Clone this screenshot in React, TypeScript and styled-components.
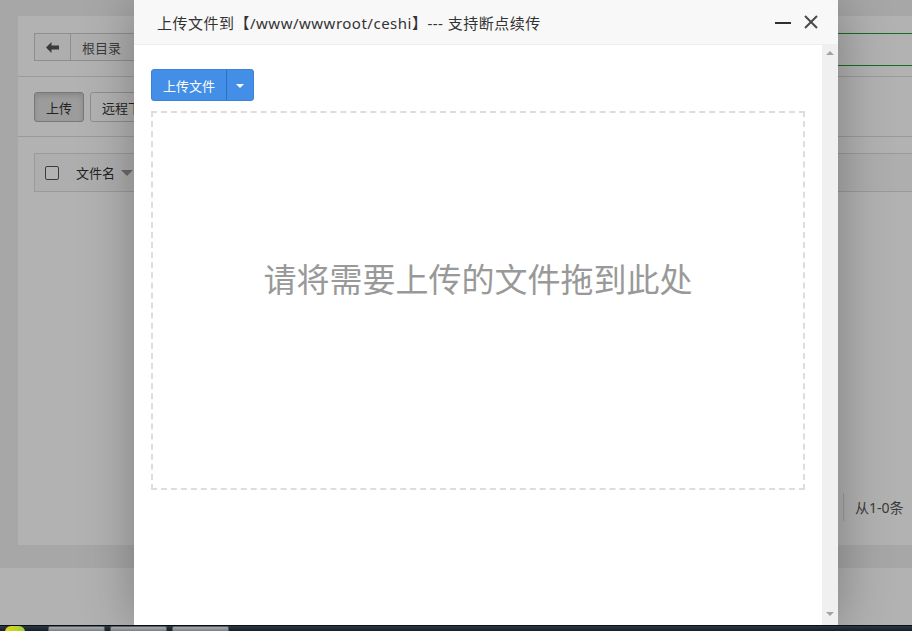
import React from 'react'
import styled, { createGlobalStyle } from 'styled-components'

const GlobalStyle = createGlobalStyle`
  html, body {
    margin: 0;
    padding: 0;
    width: 912px;
    height: 631px;
    overflow: hidden;
    background: #1b2631;
  }
  body {
    font-family: 'Noto Sans', 'Noto Sans CJK SC', sans-serif;
    color: #555;
  }
  * {
    box-sizing: border-box;
  }
`

const Screen = styled.div`
  display: flex;
  flex-direction: column;
  width: 912px;
  height: 631px;
`

const Page = styled.div`
  position: relative;
  height: 625px;
  flex-shrink: 0;
  overflow: hidden;
  background: #f0f0f0;
  display: flex;
  flex-direction: column;
`

const Main = styled.main`
  flex: 1;
  display: flex;
  padding: 16px 0 23px 18px;
  min-height: 0;
`

const Panel = styled.section`
  width: 930px;
  flex-shrink: 0;
  background: #fff;
  display: flex;
  flex-direction: column;
`

const TopRow = styled.div`
  display: flex;
  align-items: flex-start;
  justify-content: space-between;
  padding: 17px 16px 10px;
  border-bottom: 1px solid #ddd;
`

const PathBar = styled.div`
  display: flex;
  height: 28px;
  border: 1px solid #ccc;
  background: #fafafa;
`

const BackBtn = styled.div`
  width: 36px;
  display: flex;
  align-items: center;
  justify-content: center;
  border-right: 1px solid #ccc;
  color: #555;
`

const Crumb = styled.div`
  display: flex;
  align-items: center;
  padding: 0 14px 0 11px;
  font-size: 13px;
  color: #555;
`

const SearchBox = styled.div`
  width: 280px;
  height: 33px;
  border: 1px solid #1e9c36;
  background: #fff;
`

const ToolRow = styled.div`
  display: flex;
  gap: 6px;
  padding: 15px 16px 14px;
  border-bottom: 1px solid #ddd;
`

const ToolButton = styled.button<{ $active?: boolean }>`
  height: 30px;
  padding: 0 11px;
  font-family: inherit;
  font-size: 13px;
  color: #333;
  border: 1px solid ${({ $active }) => ($active ? '#adadad' : '#ccc')};
  border-radius: 3px;
  background: ${({ $active }) => ($active ? '#e0e0e0' : '#fff')};
  box-shadow: ${({ $active }) => ($active ? 'inset 0 3px 5px rgba(0,0,0,.125)' : 'none')};
`

const TableArea = styled.div`
  padding: 16px 0 0 16px;
`

const HeadRow = styled.div`
  display: flex;
  align-items: center;
  height: 39px;
  border: 1px solid #ddd;
  background: #fafafa;
  font-size: 13px;
  color: #333;
`

const CheckBox = styled.span`
  width: 14px;
  height: 14px;
  margin: 0 17px 0 10px;
  border: 1px solid #555;
  border-radius: 2px;
  background: #fff;
`

const HeadCell = styled.span<{ $w: number }>`
  width: ${({ $w }) => $w}px;
  display: flex;
  align-items: center;
  gap: 6px;
`

const Caret = styled.span`
  width: 0;
  height: 0;
  border-left: 6px solid transparent;
  border-right: 6px solid transparent;
  border-top: 6px solid #999;
`

const Pager = styled.div`
  margin-top: auto;
  display: flex;
  justify-content: flex-end;
  padding: 0 36px 24px;
`

const PagerItem = styled.span`
  height: 28px;
  width: 69px;
  display: flex;
  align-items: center;
  padding: 0 0 0 11px;
  border-left: 1px solid #ddd;
  font-size: 14px;
  color: #555;
  white-space: nowrap;
`

const Footer = styled.footer`
  height: 57px;
  flex-shrink: 0;
  background: #fff;
`

const Overlay = styled.div`
  position: absolute;
  inset: 0;
  background: rgba(0, 0, 0, 0.3);
  z-index: 10;
`

const Modal = styled.div`
  position: absolute;
  left: 134px;
  top: 0;
  width: 704px;
  height: 625px;
  z-index: 11;
  display: flex;
  flex-direction: column;
  background: #fff;
  box-shadow: 1px 1px 50px rgba(0, 0, 0, 0.3);
`

const ModalHead = styled.div`
  height: 45px;
  flex-shrink: 0;
  display: flex;
  align-items: center;
  padding: 0 19px 0 23px;
  background: #f8f8f8;
  border-bottom: 1px solid #eee;
`

const ModalTitle = styled.div`
  flex: 1;
  font-size: 15px;
  letter-spacing: 0.5px;
  color: #333;
  white-space: nowrap;
`

const HeadTools = styled.div`
  display: flex;
  align-items: center;
  gap: 12px;
`

const MinLine = styled.span`
  display: block;
  width: 16px;
  height: 2px;
  margin-top: 2px;
  background: #2f2f2f;
`

const CloseBtn = styled.span`
  display: flex;
  color: #4a4a4a;
`

const ModalBody = styled.div`
  flex: 1;
  display: flex;
  min-height: 0;
`

const BodyContent = styled.div`
  flex: 1;
  padding: 24px 17px;
`

const BtnGroup = styled.div`
  display: inline-flex;
  height: 32px;
  border-radius: 3px;
  overflow: hidden;
  background: #438ee6;
  border: 1px solid #3b82d8;
`

const UploadBtn = styled.span`
  display: flex;
  align-items: center;
  padding: 0 11px;
  font-size: 13px;
  color: #fff;
`

const DropBtn = styled.span`
  width: 27px;
  display: flex;
  align-items: center;
  justify-content: center;
  border-left: 1px solid #2f6fc0;
`

const WhiteCaret = styled.span`
  width: 0;
  height: 0;
  border-left: 4px solid transparent;
  border-right: 4px solid transparent;
  border-top: 4px solid #fff;
  margin-top: 1px;
`

const DropZone = styled.div`
  margin-top: 10px;
  height: 379px;
  border: 2px dashed #ddd;
  padding-top: 147px;
  text-align: center;
  font-size: 33px;
  line-height: 40px;
  color: #999;
`

const ScrollTrack = styled.div`
  width: 16px;
  flex-shrink: 0;
  background: #f0f0f0;
  display: flex;
  flex-direction: column;
  justify-content: space-between;
  align-items: center;
  padding: 6px 0 9px;
`

const ArrowUp = styled.span`
  width: 0;
  height: 0;
  border-left: 4px solid transparent;
  border-right: 4px solid transparent;
  border-bottom: 4px solid #a3a3a3;
`

const ArrowDown = styled.span`
  width: 0;
  height: 0;
  border-left: 4px solid transparent;
  border-right: 4px solid transparent;
  border-top: 4px solid #a3a3a3;
`

const Taskbar = styled.div`
  flex: 1;
  display: flex;
  align-items: flex-start;
  gap: 5px;
  padding-left: 5px;
  background: linear-gradient(#2a3844, #111a22);
  border-top: 1px solid #0a0f14;
`

const StartOrb = styled.span`
  width: 20px;
  height: 6px;
  margin-right: 18px;
  border-radius: 10px 10px 0 0;
  background: linear-gradient(90deg, #e9d416, #9bd13a);
`

const TaskItem = styled.span`
  width: 57px;
  height: 6px;
  border: 1px solid #555d63;
  border-bottom: none;
  border-radius: 2px 2px 0 0;
  background: linear-gradient(#a8adb2, #6c7379);
`

const App: React.FC = () => {
  return (
    <>
      <GlobalStyle />
      <Screen>
        <Page>
          <Main>
            <Panel>
              <TopRow>
                <PathBar>
                  <BackBtn>
                    <svg width="13" height="11" viewBox="0 0 13 11">
                      <path d="M0 5.5 L5.5 0 V3.5 H13 V7.5 H5.5 V11 Z" fill="#555" />
                    </svg>
                  </BackBtn>
                  <Crumb>根目录</Crumb>
                  <Crumb>www</Crumb>
                </PathBar>
                <SearchBox />
              </TopRow>
              <ToolRow>
                <ToolButton $active>上传</ToolButton>
                <ToolButton>远程下载</ToolButton>
                <ToolButton>新建</ToolButton>
                <ToolButton>收藏夹</ToolButton>
              </ToolRow>
              <TableArea>
                <HeadRow>
                  <CheckBox />
                  <HeadCell $w={260}>
                    文件名 <Caret />
                  </HeadCell>
                  <HeadCell $w={110}>大小</HeadCell>
                  <HeadCell $w={140}>修改时间</HeadCell>
                  <HeadCell $w={90}>权限</HeadCell>
                </HeadRow>
              </TableArea>
              <Pager>
                <PagerItem>从1-0条</PagerItem>
              </Pager>
            </Panel>
          </Main>
          <Footer />
          <Overlay />
          <Modal>
            <ModalHead>
              <ModalTitle>上传文件到【/www/wwwroot/ceshi】--- 支持断点续传</ModalTitle>
              <HeadTools>
                <MinLine />
                <CloseBtn>
                  <svg width="16" height="16" viewBox="0 0 16 16" fill="none">
                    <path d="M2 2 L14 14 M14 2 L2 14" stroke="currentColor" strokeWidth="2" />
                  </svg>
                </CloseBtn>
              </HeadTools>
            </ModalHead>
            <ModalBody>
              <BodyContent>
                <BtnGroup>
                  <UploadBtn>上传文件</UploadBtn>
                  <DropBtn>
                    <WhiteCaret />
                  </DropBtn>
                </BtnGroup>
                <DropZone>请将需要上传的文件拖到此处</DropZone>
              </BodyContent>
              <ScrollTrack>
                <ArrowUp />
                <ArrowDown />
              </ScrollTrack>
            </ModalBody>
          </Modal>
        </Page>
        <Taskbar>
          <StartOrb />
          <TaskItem />
          <TaskItem />
          <TaskItem />
        </Taskbar>
      </Screen>
    </>
  )
}

export default App
